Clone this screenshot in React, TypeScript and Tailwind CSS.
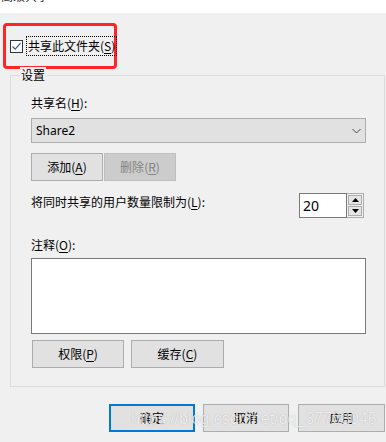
import React from 'react';

const btn =
  'h-[28px] flex items-center justify-center bg-[#e1e1e1] border border-[#adadad] text-[12px] text-black';

function Accel({ label, k }: { label: string; k: string }) {
  return (
    <>
      {label}(<u className="underline-offset-2">{k}</u>)
    </>
  );
}

export default function App() {
  return (
    <div className="relative w-[386px] h-[442px] overflow-hidden bg-[#f0f0f0] text-[12px] leading-[16px] text-black font-['Microsoft_YaHei','Noto_Sans_CJK_SC',sans-serif]">
      {/* Title strip (cut off) */}
      <div className="h-[13px] bg-white overflow-hidden">
        <div className="-mt-[12px] pl-[1px] text-[12px] leading-[16px] text-[#333]">高级共享</div>
      </div>

      {/* Share checkbox, marked in red */}
      <div className="ml-[3px] mt-[10px] w-[114px] h-[46px] border-[3px] border-[#ff2626] rounded-[4px] flex items-center pl-[4px]">
        <div className="w-[13px] h-[13px] border border-[#333] bg-white flex items-center justify-center shrink-0">
          <svg width="11" height="11" viewBox="0 0 11 11">
            <path d="M1.5 5.5 L4.2 8.2 L9.5 2.2" fill="none" stroke="#2f5e8e" strokeWidth="1.2" />
          </svg>
        </div>
        <div className="ml-[3px] px-[1px] py-[1px] border border-dotted border-black whitespace-nowrap">
          <Accel label="共享此文件夹" k="S" />
        </div>
      </div>

      {/* Settings group */}
      <div className="relative ml-[10px] mt-[6px] w-[375px] h-[312px] border border-[#dcdcdc] pl-[20px] pr-[18px] pt-[19px]">
        <div className="absolute -top-[9px] left-[9px] px-[1px] bg-[#f0f0f0]">设置</div>

        <div>
          <Accel label="共享名" k="H" />:
        </div>
        <div className="mt-[7px] h-[25px] bg-[#e1e1e1] border border-[#adadad] flex items-center justify-between pl-[4px] pr-[4px]">
          <span className="font-['Segoe_UI','Noto_Sans',sans-serif]">Share2</span>
          <svg width="9" height="6" viewBox="0 0 9 6">
            <path d="M0.5 1 L4.5 5 L8.5 1" fill="none" stroke="#444" strokeWidth="1" />
          </svg>
        </div>

        <div className="mt-[10px] flex gap-[1px]">
          <div className={`${btn} w-[72px]`}>
            <Accel label="添加" k="A" />
          </div>
          <div className="h-[28px] w-[72px] flex items-center justify-center bg-[#cccccc] border border-[#bfbfbf] text-[#838383]">
            <Accel label="删除" k="R" />
          </div>
        </div>

        <div className="mt-[12px] flex items-start justify-between">
          <div className="pt-[1px]">
            <Accel label="将同时共享的用户数量限制为" k="L" />:
          </div>
          <div className="mr-[2px] flex h-[25px]">
            <div className="w-[48px] h-[25px] bg-white border border-[#7a7a7a] flex items-center pl-[3px] text-[14px] font-['Segoe_UI','Noto_Sans',sans-serif]">
              20
            </div>
            <div className="w-[17px] h-[25px] border border-l-0 border-[#adadad] bg-[#f0f0f0] flex flex-col p-[1px] gap-[1px]">
              <div className="flex-1 bg-[#e5e5e5] border border-[#adadad] flex items-center justify-center">
                <svg width="7" height="4" viewBox="0 0 7 4">
                  <path d="M0 4 L3.5 0 L7 4 Z" fill="#000" />
                </svg>
              </div>
              <div className="flex-1 bg-[#e5e5e5] border border-[#adadad] flex items-center justify-center">
                <svg width="7" height="4" viewBox="0 0 7 4">
                  <path d="M0 0 L3.5 4 L7 0 Z" fill="#000" />
                </svg>
              </div>
            </div>
          </div>
        </div>

        <div className="mt-[19px]">
          <Accel label="注释" k="O" />:
        </div>
        <div className="mt-[5px] h-[76px] bg-white border border-[#7a7a7a]" />

        <div className="mt-[6px] flex gap-[7px] pl-[1px]">
          <div className={`${btn} w-[92px]`}>
            <Accel label="权限" k="P" />
          </div>
          <div className={`${btn} w-[93px]`}>
            <Accel label="缓存" k="C" />
          </div>
        </div>
      </div>

      {/* Dialog buttons */}
      <div className="mt-[17px] ml-[109px] flex gap-[8px]">
        <div className="w-[86px] h-[28px] flex items-center justify-center bg-[#e1e1e1] border-2 border-[#0078d7]">确定</div>
        <div className={`${btn} w-[86px]`}>取消</div>
        <div className={`${btn} w-[87px] ml-[1px]`}>应用</div>
      </div>

      {/* Watermark */}
      <div className="absolute left-[131px] top-[409px] text-[16px] leading-[20px] text-white/75 font-['Liberation_Sans',Arial,sans-serif] [text-shadow:0_0_1px_rgba(0,0,0,0.25)] whitespace-nowrap pointer-events-none">
        https://blog.csdn.net/qq_37708045
      </div>
    </div>
  );
}
